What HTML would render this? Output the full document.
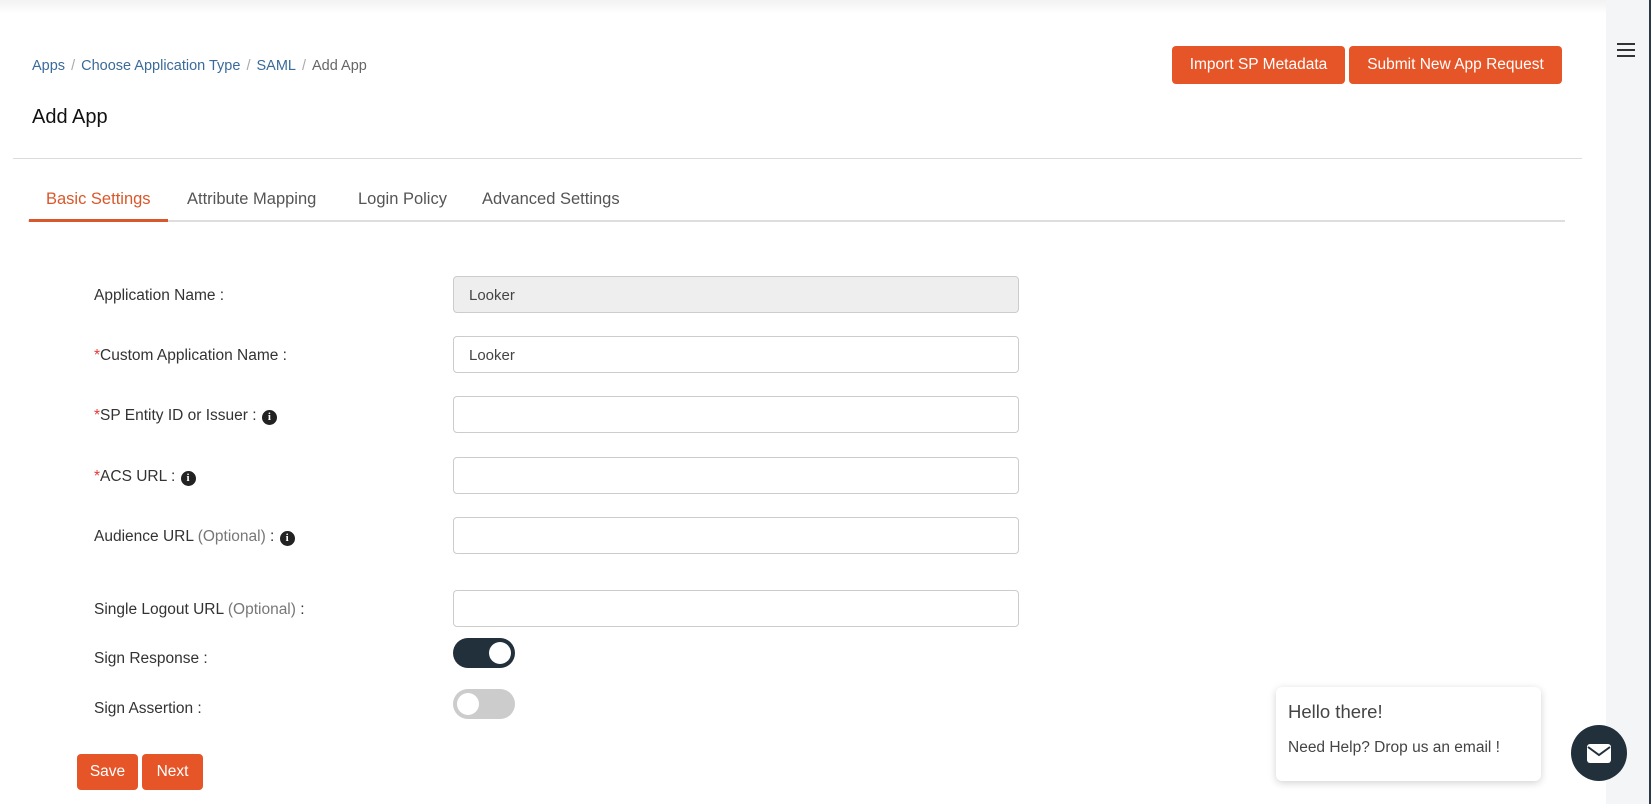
<!DOCTYPE html>
<html><head><style>
*{box-sizing:border-box;margin:0;padding:0}
body{width:1651px;height:804px;overflow:hidden;background:#fff;font-family:"Liberation Sans",sans-serif;position:relative;color:#333}
.a{position:absolute}
.top{left:0;top:0;width:1606px;height:14px;background:linear-gradient(#f2f2f2,#fff)}
.side{left:1606px;top:0;width:45px;height:804px;background:#f4f5f6;border-right:2px solid #2c3846}
.bc{left:32px;top:58px;font-size:14.5px;color:#3a6b9a}
.bc span{color:#aaa;margin:0 6px}
.btn{background:#e65527;color:#fff;border-radius:4px;font-size:15.5px;display:flex;align-items:center;justify-content:center}
h1{position:absolute;left:32px;top:106px;font-size:20px;font-weight:normal;color:#111}
.hr{left:13px;top:158px;width:1569px;height:1px;background:#dcdcdc}
.tl{left:28px;top:220px;width:1537px;height:2px;background:#dedede}
.tab{top:190px;font-size:16.5px;color:#555}
.lbl{left:94px;font-size:15.5px;color:#333}
.lbl .r{color:#e53935}
.lbl .o{color:#777}
.inp{left:453px;width:566px;height:37px;border:1px solid #ccc;border-radius:4px;font-size:15px;color:#444;padding:10px 15px}
.i{display:inline-block;width:15px;height:15px;border-radius:50%;background:#222;color:#fff;font-size:11px;font-weight:bold;text-align:center;line-height:15px;font-family:"Liberation Serif",serif;vertical-align:0px;margin-left:1px}
.tg{left:453px;width:62px;height:30px;border-radius:15px}
.knob{position:absolute;top:4px;width:22px;height:22px;border-radius:50%;background:#fff}
</style></head><body>
<div class="a top"></div>
<div class="a side"><div class="a" style="left:11px;top:43px;width:18px;height:2px;background:#333"></div><div class="a" style="left:11px;top:49px;width:18px;height:2px;background:#333"></div><div class="a" style="left:11px;top:55px;width:18px;height:2px;background:#333"></div></div>
<div class="a bc">Apps<span>/</span>Choose Application Type<span>/</span>SAML<span>/</span><b style="font-weight:normal;color:#666">Add App</b></div>
<div class="a btn" style="left:1172px;top:46px;width:173px;height:38px">Import SP Metadata</div>
<div class="a btn" style="left:1349px;top:46px;width:213px;height:38px">Submit New App Request</div>
<h1>Add App</h1>
<div class="a hr"></div>
<div class="a tl"></div>
<div class="a" style="left:29px;top:219px;width:139px;height:3px;background:#d9572b"></div>
<div class="a tab" style="left:46px;color:#d9572b">Basic Settings</div>
<div class="a tab" style="left:187px">Attribute Mapping</div>
<div class="a tab" style="left:358px">Login Policy</div>
<div class="a tab" style="left:482px">Advanced Settings</div>

<div class="a lbl" style="top:287px">Application Name :</div>
<div class="a inp" style="top:276px;background:#eee">Looker</div>
<div class="a lbl" style="top:347px"><span class="r">*</span>Custom Application Name :</div>
<div class="a inp" style="top:336px">Looker</div>
<div class="a lbl" style="top:407px"><span class="r">*</span>SP Entity ID or Issuer : <span class="i">i</span></div>
<div class="a inp" style="top:396px"></div>
<div class="a lbl" style="top:468px"><span class="r">*</span>ACS URL : <span class="i">i</span></div>
<div class="a inp" style="top:457px"></div>
<div class="a lbl" style="top:528px">Audience URL <span class="o">(Optional)</span> : <span class="i">i</span></div>
<div class="a inp" style="top:517px"></div>
<div class="a lbl" style="top:601px">Single Logout URL <span class="o">(Optional)</span> :</div>
<div class="a inp" style="top:590px"></div>
<div class="a lbl" style="top:650px">Sign Response :</div>
<div class="a tg" style="top:638px;background:#22303c"><div class="knob" style="left:36px"></div></div>
<div class="a lbl" style="top:700px">Sign Assertion :</div>
<div class="a tg" style="top:689px;background:#ccc"><div class="knob" style="left:4px"></div></div>
<div class="a btn" style="left:77px;top:754px;width:61px;height:36px">Save</div>
<div class="a btn" style="left:142px;top:754px;width:61px;height:36px">Next</div>

<div class="a" style="left:1276px;top:687px;width:265px;height:94px;background:#fff;border-radius:6px;box-shadow:0 2px 8px rgba(0,0,0,.18)">
<div class="a" style="left:12px;top:14px;font-size:18.5px;color:#444">Hello there!</div>
<div class="a" style="left:12px;top:52px;font-size:15.5px;color:#444">Need Help? Drop us an email !</div>
</div>
<div class="a" style="left:1571px;top:725px;width:56px;height:56px;border-radius:50%;background:#22303c">
<svg class="a" style="left:15px;top:15px" width="26" height="26" viewBox="0 0 26 26"><rect x="1" y="4" width="24" height="19" rx="3" fill="#fff"/><path d="M2 7 L13 15 L24 7" stroke="#22303c" stroke-width="2" fill="none"/></svg>
</div>
</body></html>
